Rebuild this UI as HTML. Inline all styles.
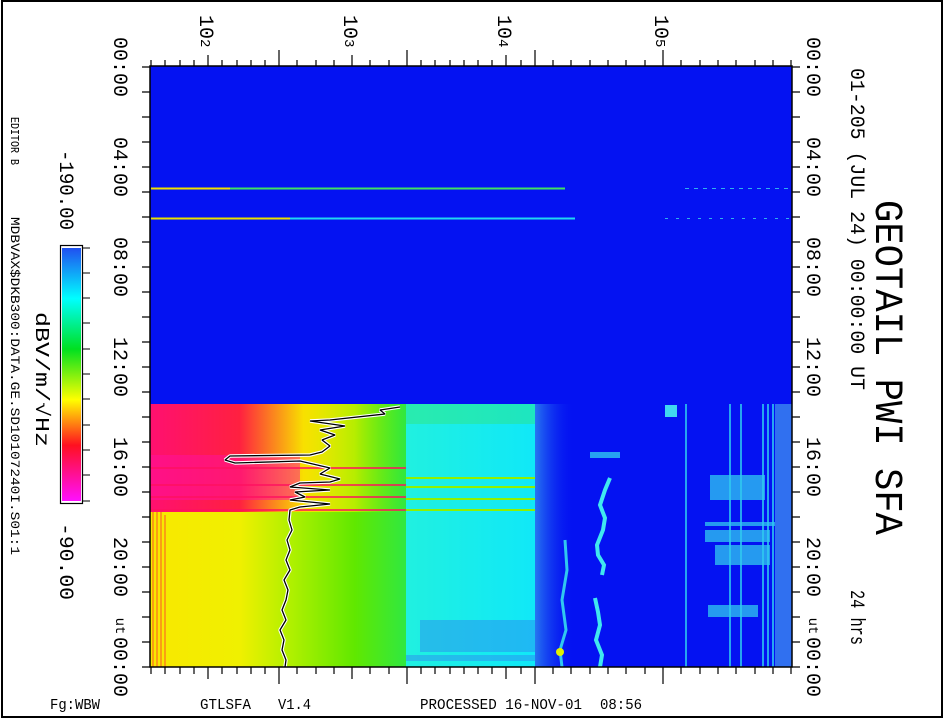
<!DOCTYPE html>
<html><head><meta charset="utf-8"><style>
html,body{margin:0;padding:0;background:#fff;width:945px;height:720px;overflow:hidden}
svg{display:block}
text{font-family:"Liberation Mono",monospace;fill:#000}
</style></head><body>
<svg width="945" height="720" viewBox="0 0 945 720" xmlns="http://www.w3.org/2000/svg">
<defs>
<linearGradient id="cb" x1="0" y1="0" x2="0" y2="1">
<stop offset="0" stop-color="#2050f0"/><stop offset="0.2" stop-color="#00ffff"/>
<stop offset="0.4" stop-color="#00e020"/><stop offset="0.6" stop-color="#ffff00"/>
<stop offset="0.78" stop-color="#ff1020"/><stop offset="1" stop-color="#ff10ff"/>
</linearGradient>
<linearGradient id="lg" x1="150" y1="0" x2="406" y2="0" gradientUnits="userSpaceOnUse">
<stop offset="0" stop-color="#f8e800"/><stop offset="0.35" stop-color="#f0f000"/>
<stop offset="0.55" stop-color="#b0f000"/><stop offset="0.8" stop-color="#60e800"/><stop offset="1" stop-color="#30e840"/>
</linearGradient>
<linearGradient id="rb" x1="150" y1="0" x2="406" y2="0" gradientUnits="userSpaceOnUse">
<stop offset="0" stop-color="#ff1070"/><stop offset="0.35" stop-color="#ff2040"/>
<stop offset="0.6" stop-color="#f8e000"/><stop offset="0.8" stop-color="#f0f000" stop-opacity="0.6"/><stop offset="1" stop-color="#80f000" stop-opacity="0"/>
</linearGradient>
<linearGradient id="cy" x1="406" y1="0" x2="535" y2="0" gradientUnits="userSpaceOnUse">
<stop offset="0" stop-color="#20f0e0"/><stop offset="1" stop-color="#10e8f8"/>
</linearGradient>
<linearGradient id="bl" x1="535" y1="0" x2="575" y2="0" gradientUnits="userSpaceOnUse">
<stop offset="0" stop-color="#3090f0" stop-opacity="0.8"/><stop offset="1" stop-color="#0010f0" stop-opacity="0"/>
</linearGradient>
</defs>
<rect x="2" y="1" width="940" height="716" fill="none" stroke="#000" stroke-width="2"/>

<rect x="150" y="66" width="642" height="601" fill="#0412f2"/>
<line x1="151" y1="188.5" x2="565" y2="188.5" stroke="#40e060" stroke-width="2"/>
<line x1="151" y1="188.5" x2="230" y2="188.5" stroke="#f0e000" stroke-width="2"/>
<line x1="151" y1="218.5" x2="575" y2="218.5" stroke="#20d8f0" stroke-width="2"/>
<line x1="151" y1="218.5" x2="290" y2="218.5" stroke="#e8e000" stroke-width="2"/>
<line x1="685" y1="188.5" x2="792" y2="188.5" stroke="#30b0f0" stroke-width="1" stroke-dasharray="4 5"/>
<line x1="665" y1="218.5" x2="792" y2="218.5" stroke="#30b0f0" stroke-width="1" stroke-dasharray="3 8"/>

<rect x="150" y="404" width="256" height="263" fill="url(#lg)"/>
<rect x="150" y="404" width="256" height="108" fill="url(#rb)"/>
<rect x="150" y="455" width="150" height="45" fill="#ff10a0" opacity="0.5"/>
<g stroke="#ff1060" stroke-width="1.5">
<line x1="150" y1="468" x2="406" y2="468"/><line x1="150" y1="485" x2="406" y2="485"/>
<line x1="150" y1="497" x2="406" y2="497"/><line x1="150" y1="510" x2="406" y2="510"/>
</g>
<g stroke="#ff3030" stroke-width="1" opacity="0.8">
<line x1="153" y1="512" x2="153" y2="667"/><line x1="157" y1="512" x2="157" y2="667"/>
<line x1="161" y1="512" x2="161" y2="667"/><line x1="165" y1="515" x2="165" y2="667"/>
</g>
<rect x="406" y="404" width="129" height="263" fill="url(#cy)"/>
<g stroke="#90f000" stroke-width="2">
<line x1="406" y1="478" x2="535" y2="478"/><line x1="406" y1="487" x2="535" y2="487"/>
<line x1="406" y1="499" x2="535" y2="499"/><line x1="406" y1="510" x2="535" y2="510"/>
</g>
<rect x="406" y="404" width="129" height="20" fill="#40e040" opacity="0.3"/>
<rect x="420" y="620" width="115" height="32" fill="#3080f0" opacity="0.45"/>
<rect x="406" y="655" width="129" height="6" fill="#3080f0" opacity="0.45"/>
<rect x="535" y="404" width="40" height="263" fill="url(#bl)"/>
<g fill="none" stroke="#40e8f0" stroke-width="4">
<path d="M610 478 L605 490 L600 505 L605 518 L603 530 L597 545 L598 555 L604 565 L602 575 M595 598 L598 612 L600 625 L596 640 L602 655 L600 667"/>
<path d="M565 540 L567 570 L562 600 L566 630 L560 650 L562 667" stroke="#30c8f0" stroke-width="3"/>
</g>
<circle cx="560" cy="652" r="4" fill="#e0f000"/>
<rect x="665" y="405" width="12" height="12" fill="#40d8f0"/>
<g stroke="#30d8f0" stroke-width="1.5">
<line x1="686" y1="404" x2="686" y2="667"/><line x1="730" y1="404" x2="730" y2="667"/>
<line x1="741" y1="404" x2="741" y2="667"/><line x1="763" y1="404" x2="763" y2="667"/>
<line x1="768" y1="404" x2="768" y2="667"/><line x1="773" y1="404" x2="773" y2="667"/>
</g>
<rect x="775" y="404" width="17" height="263" fill="#3070f0"/>
<g fill="#30c8f0" opacity="0.75">
<rect x="710" y="475" width="55" height="25"/><rect x="705" y="530" width="65" height="12"/>
<rect x="715" y="545" width="55" height="20"/><rect x="708" y="605" width="50" height="12"/>
<rect x="705" y="522" width="70" height="4"/>
</g>
<rect x="590" y="452" width="30" height="6" fill="#30c8f0" opacity="0.8"/>

<g fill="none" stroke-linejoin="bevel">
<polyline stroke="#fff" stroke-width="3.5" points="400,407 380,410 385,414 330,420 310,421 345,426 320,430 335,435 322,440 330,446 322,452 310,455 230,456 225,460 235,463 300,461 330,468 320,474 340,479 330,482 300,483 290,487 330,490 295,492 305,497 290,500 330,504 300,507 290,510 289,520 292,530 287,540 290,550 286,560 290,570 284,580 288,590 286,600 282,610 286,620 280,630 284,640 282,650 286,660 285,667"/>
<polyline stroke="#000" stroke-width="1.3" points="400,407 380,410 385,414 330,420 310,421 345,426 320,430 335,435 322,440 330,446 322,452 310,455 230,456 225,460 235,463 300,461 330,468 320,474 340,479 330,482 300,483 290,487 330,490 295,492 305,497 290,500 330,504 300,507 290,510 289,520 292,530 287,540 290,550 286,560 290,570 284,580 288,590 286,600 282,610 286,620 280,630 284,640 282,650 286,660 285,667"/>
</g>

<rect x="150" y="66" width="642" height="601" fill="none" stroke="#000" stroke-width="1.5"/>

<g stroke="#000" stroke-width="1.2">
<path d="M142 67H150M142 92H150M142 117H150M142 142H150M142 167H150M142 192H150M142 217H150M142 242H150M142 267H150M142 292H150M142 317H150M142 342H150M142 367H150M142 392H150M142 417H150M142 442H150M142 467H150M142 492H150M142 517H150M142 542H150M142 567H150M142 592H150M142 617H150M142 642H150M142 667H150"/>
<path d="M792 67H800M792 92H800M792 117H800M792 142H800M792 167H800M792 192H800M792 217H800M792 242H800M792 267H800M792 292H800M792 317H800M792 342H800M792 367H800M792 392H800M792 417H800M792 442H800M792 467H800M792 492H800M792 517H800M792 542H800M792 567H800M792 592H800M792 617H800M792 642H800M792 667H800"/>
<path d="M151 60V66M165 60V66M180 60V66M194 60V66M208 55V66M222 60V66M237 60V66M251 60V66M265 60V66M279 50V66M297 60V66M316 60V66M334 60V66M352 55V66M370 60V66M389 60V66M407 50V66M421 60V66M435 60V66M450 60V66M464 60V66M478 60V66M492 60V66M506 55V66M521 60V66M535 50V66M553 60V66M571 60V66M590 60V66M608 60V66M626 60V66M645 60V66M663 50V66M681 60V66M700 60V66M718 60V66M736 60V66M755 60V66M773 60V66M791 60V66"/>
<path d="M151 667V674M165 667V674M180 667V674M194 667V674M208 667V679M222 667V674M237 667V674M251 667V674M265 667V674M279 667V684M297 667V674M316 667V674M334 667V674M352 667V679M370 667V674M389 667V674M407 667V684M421 667V674M435 667V674M450 667V674M464 667V674M478 667V674M492 667V674M506 667V679M521 667V674M535 667V684M553 667V674M571 667V674M590 667V674M608 667V674M626 667V674M645 667V674M663 667V684M681 667V674M700 667V674M718 667V674M736 667V674M755 667V674M773 667V674M791 667V674"/>
</g>

<rect x="60.5" y="245.5" width="22" height="258" fill="#fff" stroke="#000" stroke-width="1.2"/>
<rect x="62" y="248" width="19" height="253" fill="url(#cb)"/>
<path d="M83 248H90M83 273H90M83 298H90M83 323H90M83 349H90M83 374H90M83 399H90M83 425H90M83 450H90M83 475H90M83 501H90" stroke="#000" stroke-width="1"/>

<g font-size="20">
<text transform="translate(114,67) rotate(90)" text-anchor="middle" textLength="60" lengthAdjust="spacingAndGlyphs">00:00</text>
<text transform="translate(114,167) rotate(90)" text-anchor="middle" textLength="60" lengthAdjust="spacingAndGlyphs">04:00</text>
<text transform="translate(114,267) rotate(90)" text-anchor="middle" textLength="60" lengthAdjust="spacingAndGlyphs">08:00</text>
<text transform="translate(114,367) rotate(90)" text-anchor="middle" textLength="60" lengthAdjust="spacingAndGlyphs">12:00</text>
<text transform="translate(114,467) rotate(90)" text-anchor="middle" textLength="60" lengthAdjust="spacingAndGlyphs">16:00</text>
<text transform="translate(114,567) rotate(90)" text-anchor="middle" textLength="60" lengthAdjust="spacingAndGlyphs">20:00</text>
<text transform="translate(114,667) rotate(90)" text-anchor="middle" textLength="60" lengthAdjust="spacingAndGlyphs">00:00</text>
<text transform="translate(116,626) rotate(90)" text-anchor="middle" font-size="14">ut</text>
<text transform="translate(807,67) rotate(90)" text-anchor="middle" textLength="60" lengthAdjust="spacingAndGlyphs">00:00</text>
<text transform="translate(807,167) rotate(90)" text-anchor="middle" textLength="60" lengthAdjust="spacingAndGlyphs">04:00</text>
<text transform="translate(807,267) rotate(90)" text-anchor="middle" textLength="60" lengthAdjust="spacingAndGlyphs">08:00</text>
<text transform="translate(807,367) rotate(90)" text-anchor="middle" textLength="60" lengthAdjust="spacingAndGlyphs">12:00</text>
<text transform="translate(807,467) rotate(90)" text-anchor="middle" textLength="60" lengthAdjust="spacingAndGlyphs">16:00</text>
<text transform="translate(807,567) rotate(90)" text-anchor="middle" textLength="60" lengthAdjust="spacingAndGlyphs">20:00</text>
<text transform="translate(807,667) rotate(90)" text-anchor="middle" textLength="60" lengthAdjust="spacingAndGlyphs">00:00</text>
<text transform="translate(809,626) rotate(90)" text-anchor="middle" font-size="14">ut</text>
</g>

<g font-size="20">
<text transform="translate(200,15) rotate(90)">10<tspan font-size="14" dy="-1">2</tspan></text>
<text transform="translate(344,15) rotate(90)">10<tspan font-size="14" dy="-1">3</tspan></text>
<text transform="translate(498,15) rotate(90)">10<tspan font-size="14" dy="-1">4</tspan></text>
<text transform="translate(655,15) rotate(90)">10<tspan font-size="14" dy="-1">5</tspan></text>
</g>

<text transform="translate(876,200) rotate(90)" font-family="Liberation Sans, sans-serif" font-size="40" textLength="335" lengthAdjust="spacingAndGlyphs">GEOTAIL PWI SFA</text>
<text transform="translate(851,68) rotate(90)" font-size="20" textLength="322" lengthAdjust="spacingAndGlyphs">01-205 (JUL 24) 00:00:00 UT</text>
<text transform="translate(851,590) rotate(90)" font-size="20" textLength="55" lengthAdjust="spacingAndGlyphs">24 hrs</text>

<text transform="translate(11,117) rotate(90)" font-size="12" textLength="48" lengthAdjust="spacingAndGlyphs">EDITOR B</text>
<text transform="translate(11,217) rotate(90)" font-size="13" textLength="338" lengthAdjust="spacingAndGlyphs">MDBVAX$DKB300:DATA.GE.SD10107240I.S01:1</text>
<text transform="translate(60,150) rotate(90)" font-size="20" textLength="80" lengthAdjust="spacingAndGlyphs">-190.00</text>
<text transform="translate(60,523) rotate(90)" font-size="20" textLength="77" lengthAdjust="spacingAndGlyphs">-90.00</text>
<text transform="translate(36,312) rotate(90)" font-family="Liberation Sans, sans-serif" font-size="19" textLength="135" lengthAdjust="spacingAndGlyphs">dBV/m/√Hz</text>

<g font-size="15">
<text x="50" y="709" textLength="50" lengthAdjust="spacingAndGlyphs">Fg:WBW</text>
<text x="200" y="709" textLength="51" lengthAdjust="spacingAndGlyphs">GTLSFA</text>
<text x="278" y="709" textLength="33" lengthAdjust="spacingAndGlyphs">V1.4</text>
<text x="420" y="709" textLength="162" lengthAdjust="spacingAndGlyphs">PROCESSED 16-NOV-01</text>
<text x="600" y="709" textLength="42" lengthAdjust="spacingAndGlyphs">08:56</text>
</g>
</svg>
</body></html>
